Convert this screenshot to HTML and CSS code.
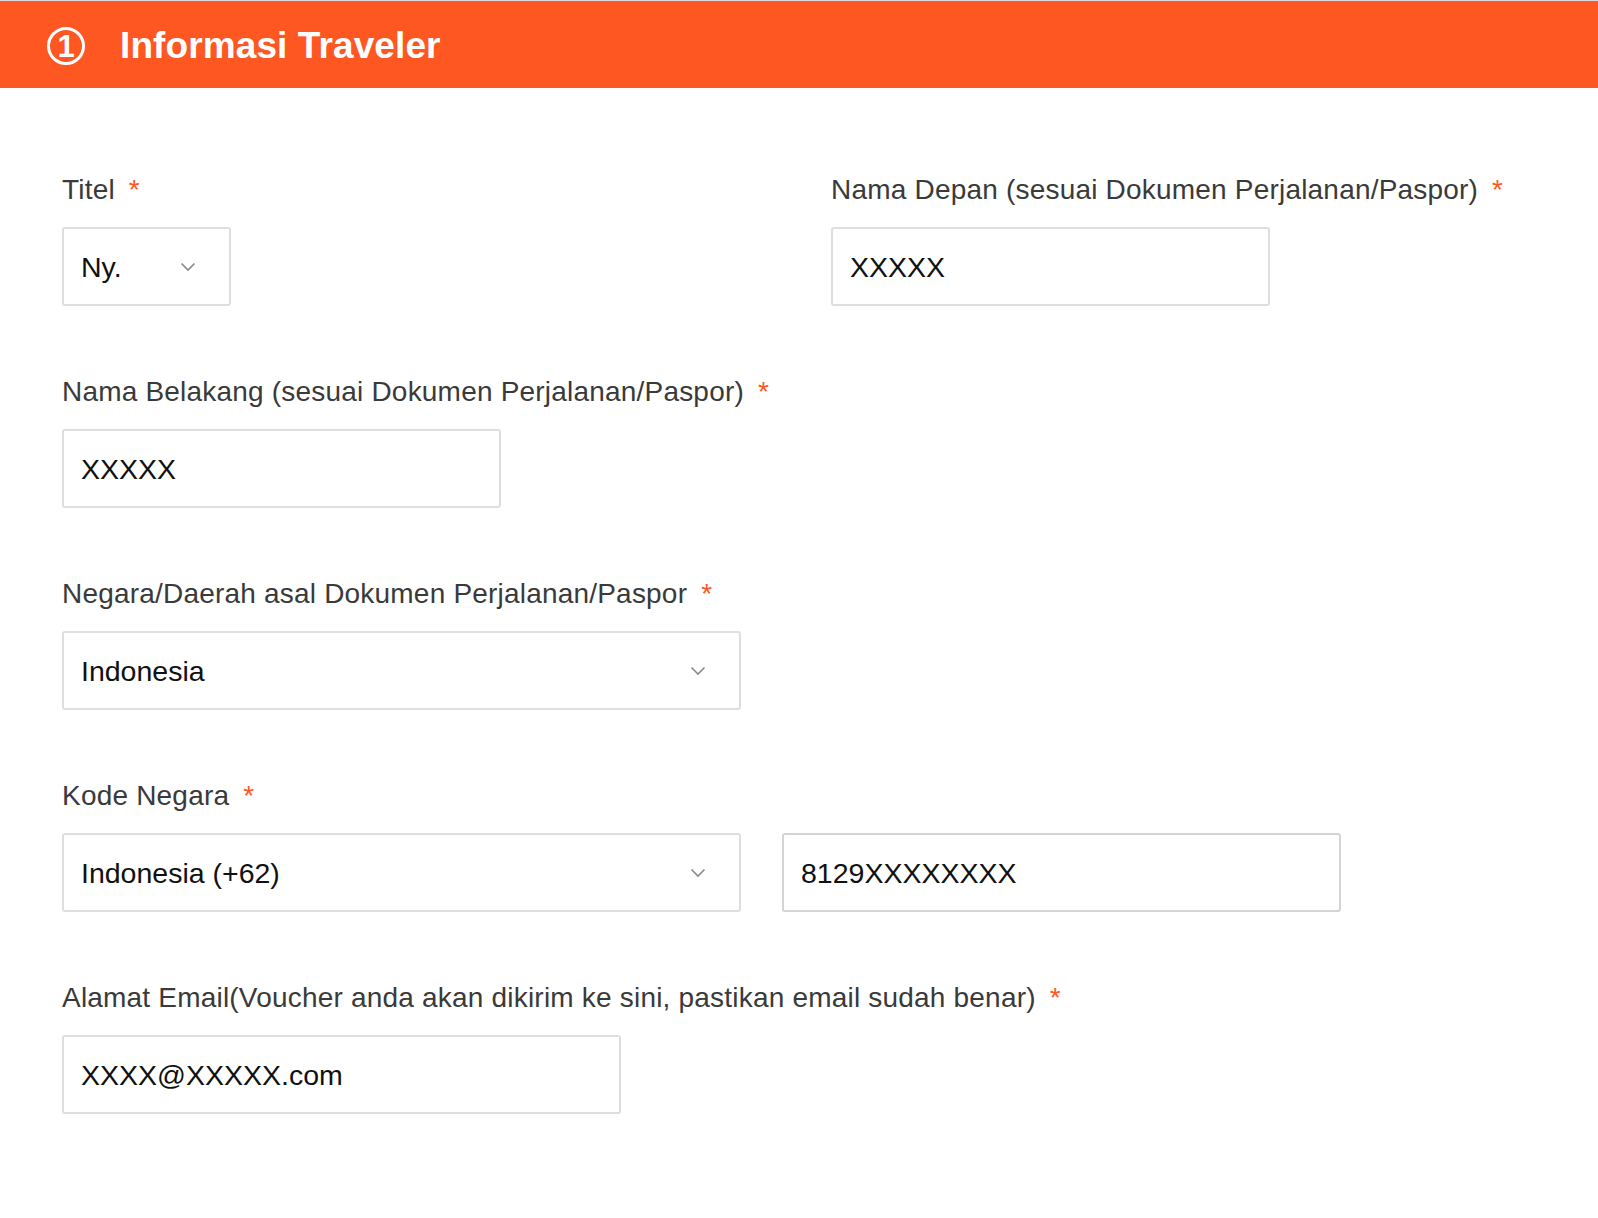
FILE: index.html
```html
<!DOCTYPE html>
<html lang="id">
<head>
<meta charset="utf-8">
<title>Informasi Traveler</title>
<link rel="stylesheet" href="styles.css">
</head>
<body>
<div class="page">
  <header class="bar">
    <svg class="step" width="40" height="40" viewBox="0 0 40 40">
      <circle cx="20" cy="20" r="17.5" fill="none" stroke="#fff" stroke-width="3"/>
      <text x="20" y="31" text-anchor="middle" class="step-num">1</text>
    </svg>
    <h1 class="title">Informasi Traveler</h1>
  </header>

  <form class="form">
    <div class="row two">
      <div class="field">
        <label class="label">Titel <span class="req">*</span></label>
        <div class="box select w-titel">
          <span class="val">Ny.</span>
          <svg class="chev" width="16" height="10" viewBox="0 0 16 10"><path d="M1.5 1.5 L8 8 L14.5 1.5" fill="none" stroke="#8a8a8a" stroke-width="1.6"/></svg>
        </div>
      </div>
      <div class="field">
        <label class="label">Nama Depan (sesuai Dokumen Perjalanan/Paspor) <span class="req">*</span></label>
        <div class="box w-name"><span class="val">XXXXX</span></div>
      </div>
    </div>

    <div class="row">
      <div class="field">
        <label class="label">Nama Belakang (sesuai Dokumen Perjalanan/Paspor) <span class="req">*</span></label>
        <div class="box w-name"><span class="val">XXXXX</span></div>
      </div>
    </div>

    <div class="row">
      <div class="field">
        <label class="label">Negara/Daerah asal Dokumen Perjalanan/Paspor <span class="req">*</span></label>
        <div class="box select w-wide">
          <span class="val">Indonesia</span>
          <svg class="chev" width="16" height="10" viewBox="0 0 16 10"><path d="M1.5 1.5 L8 8 L14.5 1.5" fill="none" stroke="#8a8a8a" stroke-width="1.6"/></svg>
        </div>
      </div>
    </div>

    <div class="row">
      <div class="field">
        <label class="label">Kode Negara <span class="req">*</span></label>
        <div class="phone">
          <div class="box select w-wide">
            <span class="val">Indonesia (+62)</span>
            <svg class="chev" width="16" height="10" viewBox="0 0 16 10"><path d="M1.5 1.5 L8 8 L14.5 1.5" fill="none" stroke="#8a8a8a" stroke-width="1.6"/></svg>
          </div>
          <div class="box w-phone"><span class="val">8129XXXXXXXX</span></div>
        </div>
      </div>
    </div>

    <div class="row">
      <div class="field">
        <label class="label">Alamat Email(Voucher anda akan dikirim ke sini, pastikan email sudah benar) <span class="req">*</span></label>
        <div class="box w-email"><span class="val">XXXX@XXXXX.com</span></div>
      </div>
    </div>
  </form>
</div>
</body>
</html>
```

FILE: styles.css
```css
* { box-sizing: border-box; }
html, body { margin: 0; padding: 0; background: #fff; }
body {
  font-family: "Liberation Sans", Arial, sans-serif;
  color: #333;
}
.page {
  border-top: 1px solid #dcdcdc;
}
.bar {
  height: 87px;
  background: #ff5722;
  display: flex;
  align-items: center;
  padding-left: 46px;
}
.step { display: block; margin-top: 2px; }
.step-num {
  fill: #fff;
  font-family: "Liberation Sans", Arial, sans-serif;
  font-size: 31px;
  font-weight: 700;
}
.title {
  margin: 0 0 0 34px;
  padding-top: 3px;
  color: #fff;
  font-size: 37px;
  font-weight: 700;
  letter-spacing: 0.1px;
}
.form {
  padding: 82px 0 0 62px;
}
.row {
  margin-bottom: 66px;
}
.row.two {
  display: grid;
  grid-template-columns: 769px 1fr;
}
.field { display: flex; flex-direction: column; }
.label {
  font-size: 28px;
  line-height: 40px;
  color: #3a3a3a;
  margin-bottom: 17px;
  letter-spacing: 0.2px;
}
.req {
  color: #ff5722;
  margin-left: 6px;
}
.box {
  height: 79px;
  border: 2px solid #dedede;
  border-radius: 3px;
  display: flex;
  align-items: center;
  padding: 0 16px 0 17px;
  background: #fff;
}
.val {
  font-size: 28.5px;
  color: #111;
  padding-top: 2px;
}
.select { justify-content: space-between; padding-right: 33px; }
.chev { display: block; }
.w-titel { width: 169px; }
.w-name { width: 439px; }
.w-wide { width: 679px; }
.w-phone { width: 559px; border-color: #d4d4d4; }
.w-email { width: 559px; }
.phone { display: flex; gap: 41px; }
```
